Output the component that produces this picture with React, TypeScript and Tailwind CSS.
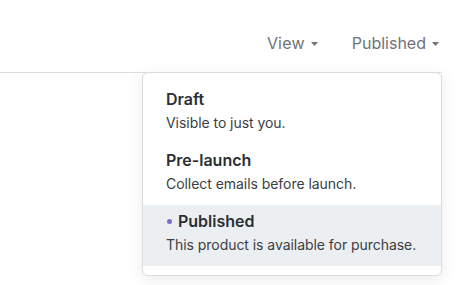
const Caret = () => (
  <svg width="7" height="4" viewBox="0 0 7 4" className="ml-[6px] mt-[2px] fill-current">
    <path d="M0 0h7L3.5 4z" />
  </svg>
);

const items = [
  { title: 'Draft', desc: 'Visible to just you.', active: false },
  { title: 'Pre-launch', desc: 'Collect emails before launch.', active: false },
  { title: 'Published', desc: 'This product is available for purchase.', active: true },
];

export default function App() {
  return (
    <div className="w-[476px] h-[285px] bg-white overflow-hidden" style={{ fontFamily: 'Inter, "Noto Sans", sans-serif' }}>
      <div className="relative w-[442px]">
        <div className="h-[73px] border-b border-[#dcdfe3] flex items-start justify-end gap-[34px] pt-[31px] pr-[3px] text-[16px] leading-6 text-[#6f7378]">
          <button className="flex items-center tracking-[0.2px]">
            View
            <Caret />
          </button>
          <button className="flex items-center">
            Published
            <Caret />
          </button>
        </div>
        <div className="absolute top-[72px] right-0 w-[300px] bg-white border border-[#d9dce0] rounded-md shadow-[0_4px_16px_rgba(0,0,0,0.08)] pt-[10px] pb-[9px]">
          {items.map((it) => (
            <div key={it.title} className={`pl-[23px] pr-4 pt-[6px] pb-[11px] ${it.active ? 'bg-[#eceff2]' : ''}`}>
              <div className="flex items-center text-[16px] leading-5 font-semibold text-[#2b2f35]">
                {it.active && <span className="w-[5px] h-[5px] rounded-full bg-[#7b6fd0] mr-[6px] ml-[1px]" />}
                {it.title}
              </div>
              <div className="mt-1 text-[14px] leading-5 tracking-[-0.05px] text-[#3a3e44]">{it.desc}</div>
            </div>
          ))}
        </div>
      </div>
    </div>
  );
}
